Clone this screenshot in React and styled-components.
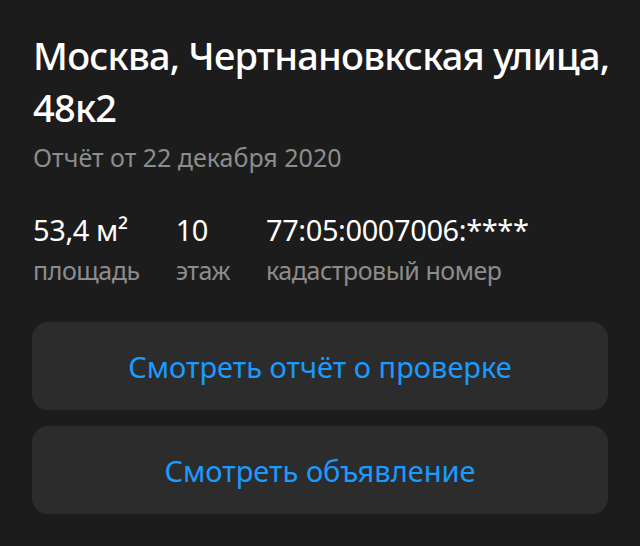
import React from 'react';
import styled, { createGlobalStyle } from 'styled-components';

const GlobalStyle = createGlobalStyle`
  html, body {
    margin: 0;
    padding: 0;
    background: #1c1c1c;
  }
  body {
    font-family: "Noto Sans", "Open Sans", sans-serif;
    -webkit-font-smoothing: antialiased;
  }
`;

const Card = styled.div`
  width: 640px;
  height: 546px;
  box-sizing: border-box;
  padding: 29px 32px 0 32px;
  background: #1c1c1c;
  color: #ffffff;
`;

const Title = styled.h1`
  margin: 0 -24px 0 1px;
  font-size: 38px;
  line-height: 52px;
  font-weight: 500;
  letter-spacing: -0.75px;
`;

const Subtitle = styled.div`
  margin: 9px 0 0 1px;
  font-size: 25px;
  line-height: 30px;
  color: #8c8c8c;
`;

const Stats = styled.div`
  display: flex;
  gap: 36px;
  margin: 41px 0 0 1px;
`;

const Stat = styled.div`
  display: flex;
  flex-direction: column;
`;

const Value = styled.div`
  font-size: 29px;
  line-height: 34px;
  color: #ffffff;
  letter-spacing: -0.4px;
`;

const Label = styled.div`
  margin-top: 8px;
  font-size: 25px;
  line-height: 30px;
  color: #8c8c8c;
  letter-spacing: -0.45px;
`;

const Actions = styled.div`
  display: flex;
  flex-direction: column;
  gap: 16px;
  margin-top: 37px;
`;

const Button = styled.button`
  height: 88px;
  padding: 0;
  border: none;
  border-radius: 16px;
  background: #2c2c2c;
  color: #1a9bff;
  font-family: inherit;
  font-size: 29px;
  cursor: pointer;
`;

const stats = [
  { value: '53,4 м²', label: 'площадь' },
  { value: '10', label: 'этаж' },
  { value: '77:05:0007006:****', label: 'кадастровый номер' },
];

export default function App() {
  return (
    <>
      <GlobalStyle />
      <Card>
        <Title>
          Москва, Чертнановкская улица,
          <br />
          48к2
        </Title>
        <Subtitle>Отчёт от 22 декабря 2020</Subtitle>
        <Stats>
          {stats.map((s) => (
            <Stat key={s.label}>
              <Value>{s.value}</Value>
              <Label>{s.label}</Label>
            </Stat>
          ))}
        </Stats>
        <Actions>
          <Button>Смотреть отчёт о проверке</Button>
          <Button>Смотреть объявление</Button>
        </Actions>
      </Card>
    </>
  );
}
